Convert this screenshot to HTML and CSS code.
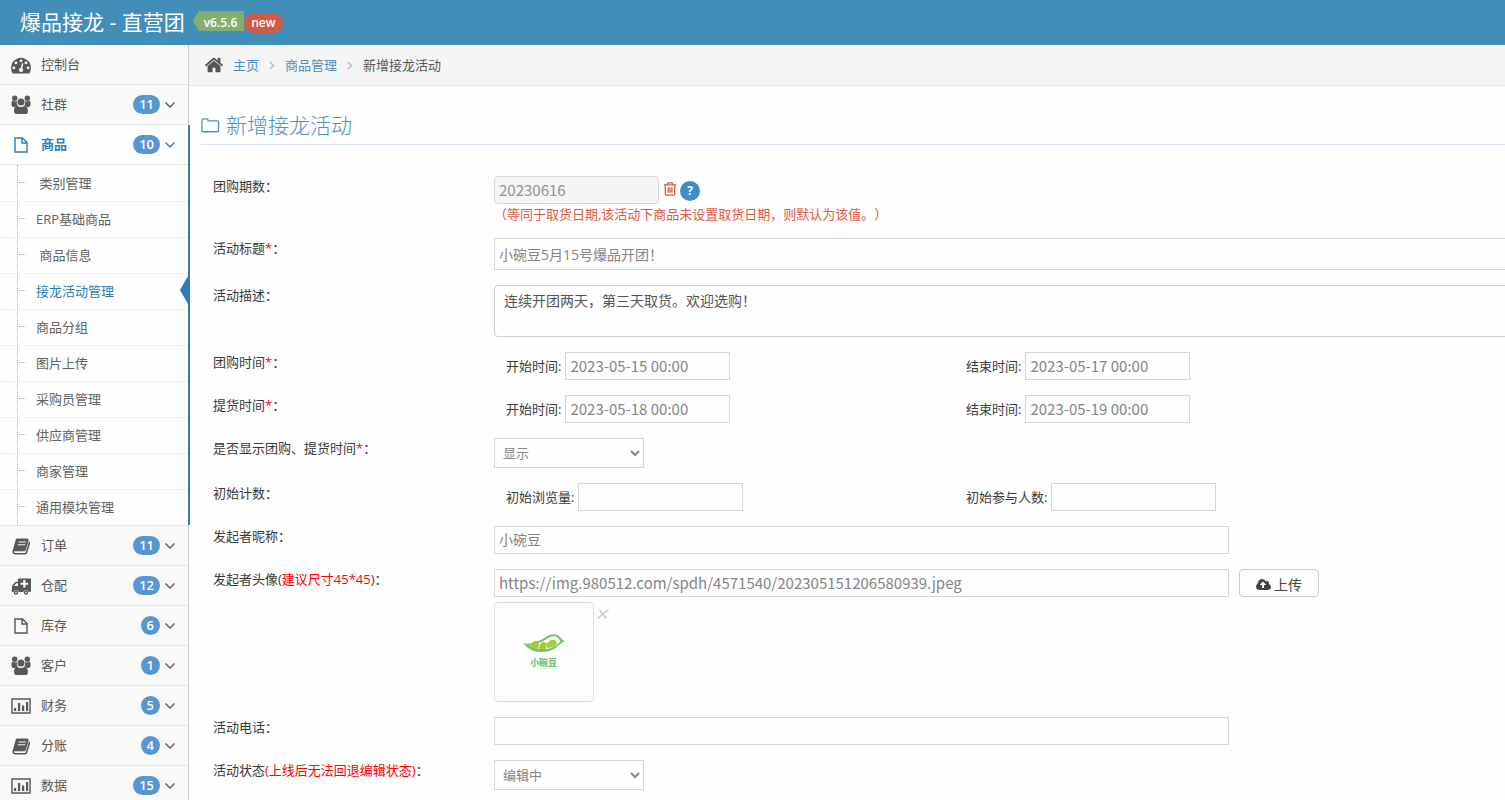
FILE: index.html
```html
<!DOCTYPE html>
<html lang="zh-CN">
<head>
<meta charset="utf-8">
<title>新增接龙活动</title>
<link rel="stylesheet" href="styles.css">
</head>
<body>
<svg class="sprite" aria-hidden="true">
  <symbol id="i-dash" viewBox="0 0 1792 1792"><path d="M384 1152q0-53-37.5-90.5t-90.5-37.5-90.5 37.500-37.500 90.500 37.500 90.500 90.500 37.500 90.500-37.500 37.500-90.500zm192-448q0-53-37.500-90.500t-90.500-37.500-90.500 37.500-37.500 90.500 37.500 90.500 90.500 37.500 90.500-37.500 37.500-90.500zm428 481l101-382q6-26-7.500-48.500t-38.500-29.500-48 6.500-30 39.500l-101 382q-60 5-107 43.500t-63 98.500q-20 77 20 146t117 89 146-20 89-117q16-60-6-117t-72-91zm660-33q0-53-37.500-90.500t-90.500-37.500-90.500 37.500-37.500 90.500 37.500 90.500 90.500 37.500 90.500-37.500 37.500-90.500zm-640-640q0-53-37.500-90.500t-90.500-37.500-90.500 37.500-37.500 90.500 37.500 90.500 90.500 37.500 90.500-37.500 37.500-90.500zm448 192q0-53-37.500-90.500t-90.500-37.500-90.500 37.500-37.500 90.500 37.500 90.500 90.500 37.500 90.500-37.500 37.500-90.500zm320 448q0 261-141 483-19 29-54 29h-1402q-35 0-54-29-141-221-141-483 0-182 71-348t191-286 286-191 348-71 348 71 286 191 191 286 71 348z"/></symbol>
  <symbol id="i-home" viewBox="0 0 1792 1792"><path d="M1472 992v480q0 26-19 45t-45 19h-384v-384h-256v384h-384q-26 0-45-19t-19-45v-480q0-1 .5-3t.5-3l575-474 575 474q1 2 1 6zm223-69l-62 74q-8 9-21 11h-3q-13 0-21-7l-692-577-692 577q-12 8-24 7-13-2-21-11l-62-74q-8-10-7-23.5t11-21.5l719-599q32-26 76-26t76 26l244 204v-195q0-14 9-23t23-9h192q14 0 23 9t9 23v408l219 182q10 8 11 21.5t-7 23.5z"/></symbol>
  <symbol id="i-cloud" viewBox="0 0 1920 1792"><path d="M1280 864q0-14-9-23l-352-352q-9-9-23-9t-23 9l-351 351q-10 12-10 24 0 14 9 23t23 9h224v352q0 13 9.500 22.500t22.500 9.500h192q13 0 22.500-9.500t9.500-22.500v-352h224q13 0 22.500-9.500t9.500-22.500zm640 288q0 159-112.500 271.500t-271.500 112.500h-1088q-185 0-316.500-131.500t-131.500-316.500q0-130 70-240t188-165q-2-30-2-43 0-212 150-362t362-150q156 0 285.500 87t188.500 231q71-62 166-62 106 0 181 75t75 181q0 76-41 138 130 31 213.500 135.500t83.500 238.500z"/></symbol>
  <symbol id="i-users" viewBox="0 0 20 20"><circle cx="3.700" cy="3.200" r="2.700"/><circle cx="16.300" cy="3.200" r="2.700"/><path d="M.5 9.500C.3 7 .8 5.700 2 5.800c1.400.8 3 .9 4.100.2-.6 1.800-.3 3.600.7 4.700-1.400.1-2.500.5-3.300 1.300H1.900C1 11.200.6 10.500.5 9.500zM19.500 9.500c.2-2.500-.3-3.800-1.500-3.700-1.400.8-3 .9-4.100.2.6 1.800.3 3.600-.7 4.700 1.400.1 2.500.5 3.300 1.300h1.600c.9-.8 1.300-1.500 1.400-2.500z"/><circle cx="10" cy="7" r="3.500"/><path d="M6.300 10.700c2 1.800 5.400 1.800 7.400 0 2.400-.1 3.300 3 3.200 6 0 1.300-1 2.300-2.400 2.300h-9c-1.400 0-2.400-1-2.400-2.300-.1-3 .8-6.100 3.200-6z"/></symbol>
  <symbol id="i-file" viewBox="0 0 20 20"><path d="M4 3h7.500L16 7.500V17H4zM11 3v5h5" class="line"/></symbol>
  <symbol id="i-book" viewBox="0 0 20 20"><path fill-rule="evenodd" d="M6.500 2.500h9.600c1.200 0 1.900.9 1.500 2.100l-2.800 9.300c-.3.900-1 1.300-1.900 1.300H4c-.9 0-1.300.5-1 1.100.2.500.7.700 1.400.7h9c.8 0 1.200-.4 1.400-1.100L17.700 6.300l.8-.7c.6.5.8 1.200.5 2.100l-2.800 9c-.3 1-1.100 1.700-2.300 1.700H4.200C2 18.400.8 16.700 1.500 15L4.700 4c.3-1 .9-1.500 1.800-1.500zM7.700 5.500l-.3 1.100h7.200l.3-1.100zM7 8.200l-.3 1.100h7.200l.3-1.100z"/></symbol>
  <symbol id="i-truck" viewBox="0 0 20 20"><path fill-rule="evenodd" d="M8 2.500h11c.6 0 1 .4 1 1V15c0 .6-.4 1-1 1h-1.300a2.800 2.800 0 0 0-5.400 0H7.700a2.800 2.800 0 0 0-5.400 0H1.500c-.6 0-.8-.4-.8-1l.5-5c0-.5.2-.8.600-1.200l2.300-2.500c.3-.3.700-.5 1.200-.5H7V3.500c0-.6.4-1 1-1zM2.800 10H7V7.300H5.300zM12.200 4v2.700H9.500v2.100h2.700v2.700h2.300V8.800h2.700V6.700h-2.700V4z"/><circle cx="5" cy="16.500" r="1.500" class="line"/><circle cx="15" cy="16.500" r="1.500" class="line"/></symbol>
  <symbol id="i-chart" viewBox="0 0 20 20"><path class="line" d="M1 3h18v14H1z"/><path d="M3 12h2.200v3H3zM7 7h2.200v8H7zM11 9.500h2.200V15H11zM15 6h2.200v9H15z"/></symbol>
  <symbol id="i-down" viewBox="0 0 12 12"><path class="line" d="M1.500 3.500L6 8l4.500-4.500"/></symbol>
  <symbol id="i-right" viewBox="0 0 12 12"><path class="line" d="M4 3l3.500 3.500L4 10"/></symbol>
  <symbol id="i-folder" viewBox="0 0 20 20"><path class="line" d="M1 4.500Q1 3 2.500 3h3.500q1.500 0 1.500 1.500v.6h9.500q1.500 0 1.500 1.500v8.500q0 1.500-1.500 1.500H2.500q-1.500 0-1.500-1.500z"/></symbol>
  <symbol id="i-trash" viewBox="0 0 16 16"><path class="line" d="M1 3.500h13M4.500 3.300L5.300 1.500h4.400l.8 1.800M2.500 3.500v10q0 1 1 1h8q1 0 1-1v-10M5.500 6v6M7.500 6v6M9.500 6v6"/></symbol>
  <symbol id="i-cross" viewBox="0 0 12 12"><path class="line" d="M.5 10.500Q6 6 11.500 1.500M2.500 1.500Q5 6 9.500 10.500"/></symbol>
</svg>

<header class="navbar">
  <h1 class="brand">爆品接龙 - 直营团</h1>
  <span class="version">v6.5.6</span><span class="new">new</span>
</header>

<div class="page">
  <nav class="sidebar">
    <ul class="menu">
      <li><a href="#"><svg><use href="#i-dash"/></svg><span>控制台</span></a></li>
      <li><a href="#"><svg><use href="#i-users"/></svg><span>社群</span><b class="badge">11</b><svg class="arrow"><use href="#i-down"/></svg></a></li>
      <li class="open"><a href="#"><svg><use href="#i-file"/></svg><span>商品</span><b class="badge">10</b><svg class="arrow"><use href="#i-down"/></svg></a>
        <ul class="submenu">
          <li><a href="#">&nbsp;类别管理</a></li>
          <li><a href="#">ERP基础商品</a></li>
          <li><a href="#">&nbsp;商品信息</a></li>
          <li class="current"><a href="#">接龙活动管理</a></li>
          <li><a href="#">商品分组</a></li>
          <li><a href="#">图片上传</a></li>
          <li><a href="#">采购员管理</a></li>
          <li><a href="#">供应商管理</a></li>
          <li><a href="#">商家管理</a></li>
          <li><a href="#">通用模块管理</a></li>
        </ul>
      </li>
      <li><a href="#"><svg><use href="#i-book"/></svg><span>订单</span><b class="badge">11</b><svg class="arrow"><use href="#i-down"/></svg></a></li>
      <li><a href="#"><svg><use href="#i-truck"/></svg><span>仓配</span><b class="badge">12</b><svg class="arrow"><use href="#i-down"/></svg></a></li>
      <li><a href="#"><svg><use href="#i-file"/></svg><span>库存</span><b class="badge">6</b><svg class="arrow"><use href="#i-down"/></svg></a></li>
      <li><a href="#"><svg><use href="#i-users"/></svg><span>客户</span><b class="badge">1</b><svg class="arrow"><use href="#i-down"/></svg></a></li>
      <li><a href="#"><svg><use href="#i-chart"/></svg><span>财务</span><b class="badge">5</b><svg class="arrow"><use href="#i-down"/></svg></a></li>
      <li><a href="#"><svg><use href="#i-book"/></svg><span>分账</span><b class="badge">4</b><svg class="arrow"><use href="#i-down"/></svg></a></li>
      <li><a href="#"><svg><use href="#i-chart"/></svg><span>数据</span><b class="badge">15</b><svg class="arrow"><use href="#i-down"/></svg></a></li>
    </ul>
  </nav>

  <main class="main">
    <nav class="crumbs">
      <svg class="home"><use href="#i-home"/></svg>
      <a href="#">主页</a><svg class="sep"><use href="#i-right"/></svg>
      <a href="#">商品管理</a><svg class="sep"><use href="#i-right"/></svg>
      <span>新增接龙活动</span>
    </nav>
    <div class="content">
      <h2 class="title"><svg><use href="#i-folder"/></svg>新增接龙活动</h2>
      <form class="form">
        <div class="row">
          <label for="issue">团购期数：</label>
          <div class="field">
            <div class="line-group">
              <input class="latin short locked" id="issue" type="text" value="20230616" readonly>
              <button class="trash" type="button" aria-label="删除"><svg><use href="#i-trash"/></svg></button>
              <button class="help" type="button">?</button>
            </div>
            <p class="hint">（等同于取货日期,该活动下商品未设置取货日期，则默认为该值。）</p>
          </div>
        </div>
        <div class="row">
          <label for="title">活动标题<i>*</i>：</label>
          <div class="field wide"><input class="tall" id="title" type="text" value="小碗豆5月15号爆品开团！"></div>
        </div>
        <div class="row">
          <label for="desc">活动描述：</label>
          <div class="field wide"><textarea id="desc">连续开团两天，第三天取货。欢迎选购！</textarea></div>
        </div>
        <div class="row">
          <span class="label">团购时间<i>*</i>：</span>
          <div class="field pair">
            <label>开始时间:<input class="latin short" type="text" value="2023-05-15 00:00"></label>
            <label>结束时间:<input class="latin short" type="text" value="2023-05-17 00:00"></label>
          </div>
        </div>
        <div class="row">
          <span class="label">提货时间<i>*</i>：</span>
          <div class="field pair">
            <label>开始时间:<input class="latin short" type="text" value="2023-05-18 00:00"></label>
            <label>结束时间:<input class="latin short" type="text" value="2023-05-19 00:00"></label>
          </div>
        </div>
        <div class="row">
          <label for="show">是否显示团购、提货时间<i>*</i>：</label>
          <div class="field"><select id="show"><option>显示</option></select></div>
        </div>
        <div class="row">
          <span class="label">初始计数：</span>
          <div class="field pair">
            <label>初始浏览量:<input class="latin short" type="text"></label>
            <label>初始参与人数:<input class="latin short" type="text"></label>
          </div>
        </div>
        <div class="row">
          <label for="nick">发起者昵称：</label>
          <div class="field"><input class="medium" id="nick" type="text" value="小碗豆"></div>
        </div>
        <div class="row">
          <label for="avatar">发起者头像(<em>建议尺寸45*45</em>)：</label>
          <div class="field">
            <div class="upload-row">
              <input class="medium latin" id="avatar" type="text" value="https://img.980512.com/spdh/4571540/202305151206580939.jpeg">
              <button class="upload" type="button"><svg><use href="#i-cloud"/></svg>上传</button>
            </div>
            <div class="preview">
              <div class="thumb">
                <svg viewBox="0 0 100 100" role="img" aria-label="小碗豆">
                  <path fill="#74c26c" d="M28 40c4 3 9 1 15-1 7-1 10-7 17-7 6 0 7 5 11 7-3 2-5 3-7 5-5 5-11 6-17 6-10 0-15-5-19-10z"/>
                  <path fill="#fefefe" d="M35 43c4-2 9-2 14-4 5-3 8-5 11-5 4 0 5 3 7 5-4 4-9 8-18 8-6 0-11-1-14-4z"/>
                  <path fill="#a6ca3a" d="M36 44c1-5 8-7 9-3l-1 6c-3 0-6-1-8-3zM45 47c0-6 3-9 8-6l-1 6zM53 46c-1-7 5-10 8-8 2 1 2 3 2 4-3 2-6 4-10 4z"/>
                  <text class="logo-text" x="36" y="64">小碗豆</text>
                  <path stroke="#c5e6c1" stroke-dasharray="2 1" d="M43 66.500h14"/>
                </svg>
              </div>
              <button class="remove" type="button" aria-label="移除"><svg><use href="#i-cross"/></svg></button>
            </div>
          </div>
        </div>
        <div class="row">
          <label for="phone">活动电话：</label>
          <div class="field"><input class="medium" id="phone" type="text"></div>
        </div>
        <div class="row">
          <label for="state">活动状态<em>(上线后无法回退编辑状态)</em>：</label>
          <div class="field"><select id="state"><option>编辑中</option></select></div>
        </div>
      </form>
    </div>
  </main>
</div>
</body>
</html>
```
FILE: styles.css
```css
* { box-sizing: border-box; }
body {
  display: flex;
  flex-direction: column;
  height: 100vh;
  margin: 0;
  overflow: hidden;
  background: #fefefe;
  color: #393939;
  font: 13px/20px "Open Sans", "Noto Sans CJK SC", sans-serif;
  text-spacing-trim: space-all;
}
.sprite { display: none; }
svg { display: block; flex: none; fill: currentColor; }
.line { fill: none; stroke: currentColor; stroke-width: 1.4; }
a { color: inherit; text-decoration: none; }
ul { margin: 0; padding: 0; list-style: none; }
i, em { color: #f00; font-style: normal; }
input, select, textarea, button { font: inherit; margin: 0; }

.navbar {
  display: flex;
  flex: none;
  height: 45px;
  padding-left: 20px;
  background: #438eb9;
  color: #fff;
}
.brand { margin: 0 8px 0 0; font-size: 21px; line-height: 44px; font-weight: 400; }
.version {
  height: 20px;
  margin-top: 11px;
  padding: 0 7px 0 11px;
  background: #82af6f;
  clip-path: polygon(6px 0, 100% 0, 100% 100%, 6px 100%, 0 50%);
  font-size: 12px;
  line-height: 23px;
  font-weight: 600;
}
.new {
  height: 20px;
  margin-top: 13px;
  padding: 0 7px;
  border-radius: 10px;
  background: #d15b47;
  font-size: 12px;
  line-height: 19px;
  font-weight: 600;
}

.page { display: flex; flex: 1; min-height: 0; }
.sidebar {
  position: relative;
  flex: none;
  width: 189px;
  border-right: 1px solid #ccc;
  background: #f2f2f2;
}
.menu > li { border-top: 1px solid #e5e5e5; background: #f9f9f9; color: #585858; }
.menu > li:first-child { border-top: 0; }
.menu > li > a { display: flex; align-items: center; height: 39px; padding: 0 12px 0 11px; }
.menu > li > a > svg { width: 20px; height: 20px; }
.menu > li > a > svg.arrow { width: 12px; height: 12px; }
.menu > li > a > span { flex: 1; padding: 0 0 2px 10px; }
.badge {
  margin-right: 4px;
  padding: 0 6px;
  border-radius: 10px;
  background: #5896d2;
  color: #fff;
  line-height: 19px;
  font-weight: 600;
}
.menu > .open { position: relative; background: #fefefe; color: #2b7dbc; }
.menu > .open::after {
  content: "";
  position: absolute;
  top: 0;
  right: -2px;
  bottom: 0;
  width: 2px;
  background: #2b7dbc;
}
.open > a { font-weight: 700; }
.submenu { position: relative; border-top: 1px solid #e5e5e5; color: #616161; }
.submenu::before {
  content: "";
  position: absolute;
  z-index: 1;
  top: 0;
  bottom: 0;
  left: 17px;
  border-left: 1px dotted #9dbdd6;
}
.submenu li { position: relative; height: 36px; border-top: 1px dotted #e4e4e4; }
.submenu li:first-child { border-top-color: transparent; }
.submenu li::before {
  content: "";
  position: absolute;
  top: 16px;
  left: 19px;
  width: 7px;
  border-top: 1px dotted #9dbdd6;
}
.submenu a { display: block; padding-left: 36px; line-height: 34px; }
.submenu .current { color: #2b7dbc; }
.submenu .current::after {
  content: "";
  position: absolute;
  top: 2px;
  right: 0;
  border: 14px solid transparent;
  border-left: 0;
  border-right: 8px solid #2b7dbc;
}

.main { flex: 1; min-width: 0; overflow: hidden; }
.crumbs {
  display: flex;
  align-items: center;
  height: 41px;
  padding-left: 15px;
  border-bottom: 1px solid #e5e5e5;
  background: #f5f5f5;
  color: #555;
}
.crumbs a { color: #4c8fbd; }
.home { width: 20px; height: 20px; margin-right: 9px; }
.sep { width: 12px; height: 12px; margin: 0 7px; color: #b2b6bf; }
.content { padding: 22px 0 0 12px; }
.title {
  display: flex;
  align-items: center;
  gap: 6px;
  height: 37px;
  margin: 0 0 31px;
  padding-bottom: 2px;
  border-bottom: 1px solid #d5e3ef;
  color: #4c8fcb;
  font-size: 21px;
  font-weight: 300;
}
.title svg { width: 19px; height: 19px; }

.form { display: flex; flex-direction: column; gap: 15px; padding-left: 12px; }
.row { display: flex; align-items: flex-start; }
.row > label, .label { flex: none; width: 281px; }
.field { flex: 1; min-width: 0; }
.field.wide { margin-right: -12px; }
input {
  display: block;
  height: 28px;
  padding: 0 4px 2px;
  border: 1px solid #d5d5d5;
  border-radius: 0;
  background: #fff0;
  color: #858585;
  font-size: 14px;
}
input.latin { font-family: "Noto Sans CJK SC", "Open Sans", sans-serif; font-size: 15px; }
input.short { width: 165px; }
input.medium { width: 72.7%; }
input.tall { width: 100%; height: 32px; padding-bottom: 0; }
input.locked { border-radius: 4px; background: #f5f5f5; color: #939192; }
.line-group { display: flex; align-items: center; }
.trash, .remove { padding: 0; border: 0; background: none; color: #dd5a43; }
.trash { margin: 0 2px 2px 4px; }
.trash svg { width: 15px; height: 16px; }
.trash .line { stroke-width: 1; }
.help {
  width: 20px;
  height: 20px;
  margin-top: 2px;
  padding: 0;
  border: 0;
  border-radius: 10px;
  background: #428bca;
  color: #fff;
  font-size: 12px;
  line-height: 20px;
  font-weight: 700;
}
.hint { margin: 0; color: #dd5a43; line-height: 20px; }
.row:first-child { margin-bottom: -1px; }
textarea {
  display: block;
  width: 100%;
  height: 52px;
  padding: 5px 9px;
  border: 1px solid #ccc;
  border-radius: 4px;
  background: none;
  color: #555;
  font-size: 14px;
  resize: none;
}
.pair { display: flex; }
.pair label { display: flex; align-items: center; gap: 4px; width: 45.5%; padding-left: 12px; white-space: nowrap; }
select {
  display: block;
  width: 150px;
  height: 30px;
  padding: 0 4px;
  border: 1px solid #d5d5d5;
  border-radius: 0;
  background: #fefefe;
  color: #858585;
}
.upload-row { display: flex; gap: 10px; }
.upload {
  display: flex;
  align-items: center;
  justify-content: center;
  gap: 3px;
  width: 80px;
  height: 28px;
  padding: 4px 0 0;
  border: 1px solid #ccc;
  border-radius: 4px;
  background: none;
  color: #444;
  font-size: 14px;
}
.upload svg { width: 15px; height: 14px; }
.preview { display: flex; align-items: flex-start; gap: 3px; margin-top: 5px; }
.thumb { width: 100px; height: 100px; border: 1px solid #ddd; border-radius: 4px; }
.remove { margin-top: 6px; color: #c4c4c4; }
.remove svg { width: 12px; height: 12px; }
.logo-text { fill: #74c87a; font-size: 9px; font-weight: 900; }
```
